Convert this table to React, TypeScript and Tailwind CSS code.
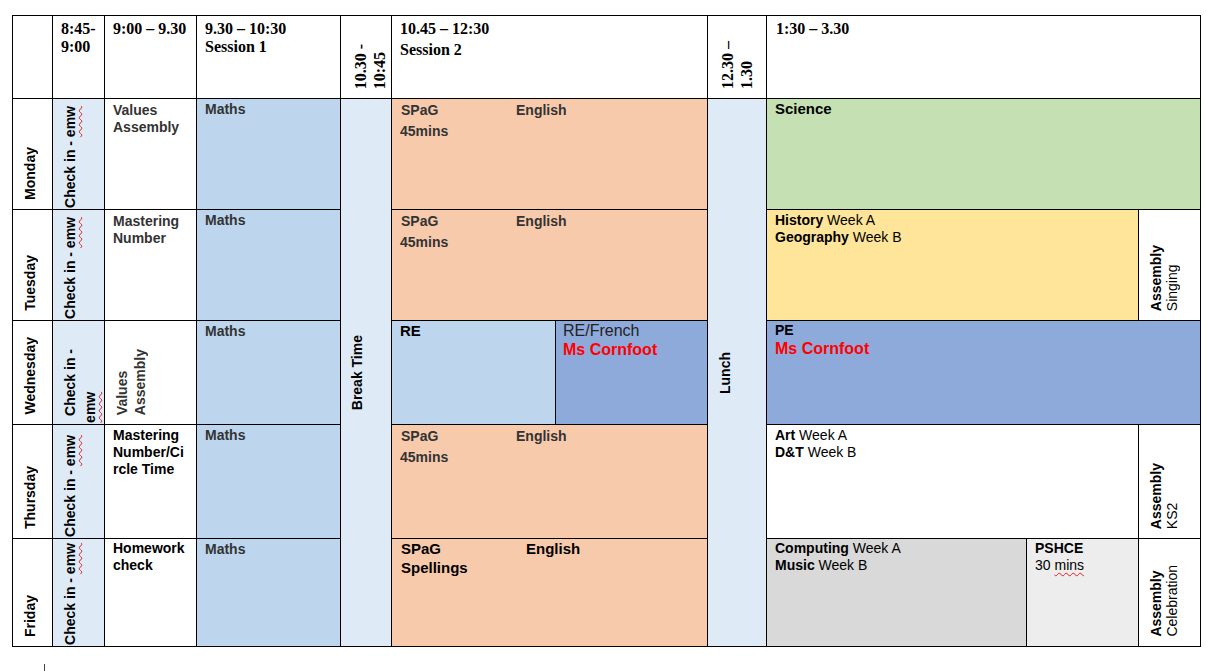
import type { ReactNode } from "react";

const serif = "font-['Liberation_Serif','Times_New_Roman',serif]";

function Vert({ children, className = "" }: { children: ReactNode; className?: string }) {
  return (
    <div className={`[writing-mode:vertical-rl] rotate-180 whitespace-nowrap ${className}`}>
      {children}
    </div>
  );
}

function Squiggle({ children }: { children: ReactNode }) {
  return (
    <span className="underline decoration-wavy decoration-[#e02020] decoration-1 underline-offset-2">
      {children}
    </span>
  );
}

function VSquiggle({ children }: { children: ReactNode }) {
  return (
    <span className="underline decoration-wavy decoration-[#e02020] decoration-1 [text-underline-position:left]">
      {children}
    </span>
  );
}

function Day({ name }: { name: string }) {
  return (
    <div className="flex items-end bg-white pb-[9px] pl-[7px]">
      <Vert className="text-[14px] font-bold leading-[20px] text-black">{name}</Vert>
    </div>
  );
}

function CheckIn() {
  return (
    <div className="flex items-end bg-[#DEEAF6] pb-[1px] pl-[7px]">
      <Vert className="text-[14px] font-bold leading-[20px] text-black">
        Check in - <VSquiggle>emw</VSquiggle>
      </Vert>
    </div>
  );
}

function Maths() {
  return (
    <div className="bg-[#BDD6EE] pl-[8px] pt-[2px] text-[14px] font-bold leading-[17px] text-[#333]">
      Maths
    </div>
  );
}

function Spag() {
  return (
    <div className="col-span-2 bg-[#F7CAAC] pl-[9px] pt-[1px] text-[14px] font-bold leading-[21px] text-[#333]">
      <div>
        <span className="inline-block w-[115px]">SPaG</span>English
      </div>
      <div className="-ml-[1px]">45mins</div>
    </div>
  );
}

function Assembly({ sub }: { sub: string }) {
  return (
    <div className="flex items-end bg-white pb-[9px] pl-[9px]">
      <Vert className="text-[14px] leading-[16px] text-black">
        <span className="font-bold">Assembly</span>
        <br />
        {sub}
      </Vert>
    </div>
  );
}

export default function App() {
  return (
    <main className="min-h-screen bg-white pl-[12px] pt-[15px] font-['Liberation_Sans',Arial,sans-serif] text-black">
      <div className="inline-grid grid-cols-[39px_51px_91px_143px_50px_163px_151px_58px_259px_111px_61px] grid-rows-[82px_110px_110px_103px_113px_107px] gap-px bg-black p-px">
        {/* Header row */}
        <div className="bg-white" />
        <div className={`bg-white pl-[8px] pt-[4px] text-[16px] font-bold leading-[18px] ${serif}`}>
          8:45-
          <br />
          9:00
        </div>
        <div className={`bg-white pl-[8px] pt-[4px] text-[16px] font-bold leading-[18px] ${serif}`}>
          9:00 – 9.30
        </div>
        <div className={`bg-white pl-[8px] pt-[4px] text-[16px] font-bold leading-[18px] ${serif}`}>
          9.30 – 10:30
          <br />
          Session 1
        </div>
        <div className={`flex items-end bg-white pb-[9px] pl-[10px] ${serif}`}>
          <Vert className="text-[16px] font-bold leading-[19px]">
            10.30 -
            <br />
            10:45
          </Vert>
        </div>
        <div className={`col-span-2 bg-white pl-[8px] pt-[4px] text-[16px] font-bold leading-[18px] ${serif}`}>
          <div>10.45 – 12:30</div>
          <div className="mt-[3px]">Session 2</div>
        </div>
        <div className={`flex items-end bg-white pb-[9px] pl-[10px] ${serif}`}>
          <Vert className="text-[16px] font-bold leading-[19px]">
            12.30 –
            <br />
            1.30
          </Vert>
        </div>
        <div className={`col-span-3 bg-white pl-[9px] pt-[4px] text-[16px] font-bold leading-[18px] ${serif}`}>
          1:30 – 3.30
        </div>

        {/* Monday */}
        <Day name="Monday" />
        <CheckIn />
        <div className="bg-white pl-[8px] pt-[3px] text-[14px] font-bold leading-[17px] text-[#333]">
          Values
          <br />
          Assembly
        </div>
        <Maths />
        <div className="col-start-5 row-start-2 row-span-5 flex items-center bg-[#DEEAF6] pl-[6px]">
          <Vert className="text-[14px] font-bold leading-[20px]">Break Time</Vert>
        </div>
        <Spag />
        <div className="col-start-8 row-start-2 row-span-5 flex items-center bg-[#DEEAF6] pl-[7px]">
          <Vert className="text-[14px] font-bold leading-[20px]">Lunch</Vert>
        </div>
        <div className="col-span-3 bg-[#C5E0B3] pl-[8px] pt-[1px] text-[15px] font-bold leading-[17px]">
          Science
        </div>

        {/* Tuesday */}
        <Day name="Tuesday" />
        <CheckIn />
        <div className="bg-white pl-[8px] pt-[3px] text-[14px] font-bold leading-[17px] text-[#333]">
          Mastering
          <br />
          Number
        </div>
        <Maths />
        <Spag />
        <div className="col-span-2 bg-[#FFE599] pl-[8px] pt-[2px] text-[14px] leading-[17px]">
          <div>
            <span className="font-bold">History</span> Week A
          </div>
          <div>
            <span className="font-bold">Geography</span> Week B
          </div>
        </div>
        <Assembly sub="Singing" />

        {/* Wednesday */}
        <Day name="Wednesday" />
        <div className="flex items-end bg-[#DEEAF6] pb-[1px] pl-[7px]">
          <Vert className="text-[14px] font-bold leading-[20px]">
            <span className="block ps-[7px]">Check in -</span>
            <span className="block">
              <VSquiggle>emw</VSquiggle>
            </span>
          </Vert>
        </div>
        <div className="flex items-end bg-white pb-[9px] pl-[8px]">
          <Vert className="text-[14px] font-bold leading-[18px] text-[#333]">
            Values
            <br />
            Assembly
          </Vert>
        </div>
        <Maths />
        <div className="bg-[#BDD6EE] pl-[8px] pt-[1px] text-[15px] font-bold leading-[17px]">RE</div>
        <div className="bg-[#8EAADB] pl-[7px] text-[16px] leading-[19px]">
          <div className="text-[#222]">RE/French</div>
          <div className="font-bold text-[#FF0000]">Ms Cornfoot</div>
        </div>
        <div className="col-span-3 bg-[#8EAADB] pl-[8px] pt-[1px]">
          <div className="text-[14px] font-bold leading-[17px]">PE</div>
          <div className="text-[16px] font-bold leading-[19px] text-[#FF0000]">Ms Cornfoot</div>
        </div>

        {/* Thursday */}
        <Day name="Thursday" />
        <CheckIn />
        <div className="bg-white pl-[8px] pt-[2px] text-[14px] font-bold leading-[17px]">
          Mastering
          <br />
          Number/Ci
          <br />
          rcle Time
        </div>
        <Maths />
        <Spag />
        <div className="col-span-2 bg-white pl-[8px] pt-[2px] text-[14px] leading-[17px]">
          <div>
            <span className="font-bold">Art</span> Week A
          </div>
          <div>
            <span className="font-bold">D&amp;T</span> Week B
          </div>
        </div>
        <Assembly sub="KS2" />

        {/* Friday */}
        <Day name="Friday" />
        <CheckIn />
        <div className="bg-white pl-[8px] pt-[1px] text-[14px] font-bold leading-[17px]">
          Homework
          <br />
          check
        </div>
        <Maths />
        <div className="col-span-2 bg-[#F7CAAC] pl-[9px] text-[15px] font-bold leading-[19px]">
          <div>
            <span className="inline-block w-[125px]">SPaG</span>English
          </div>
          <div>Spellings</div>
        </div>
        <div className="bg-[#D9D9D9] pl-[8px] pt-[1px] text-[14px] leading-[17px]">
          <div>
            <span className="font-bold">Computing</span> Week A
          </div>
          <div>
            <span className="font-bold">Music</span> Week B
          </div>
        </div>
        <div className="bg-[#EDEDED] pl-[8px] pt-[1px] text-[14px] leading-[17px]">
          <div className="font-bold">PSHCE</div>
          <div>
            30 <Squiggle>mins</Squiggle>
          </div>
        </div>
        <Assembly sub="Celebration" />
      </div>

      {/* text cursor below the table */}
      <div className="ml-[32px] mt-[17px] h-[8px] w-px bg-[#444]" />
    </main>
  );
}
